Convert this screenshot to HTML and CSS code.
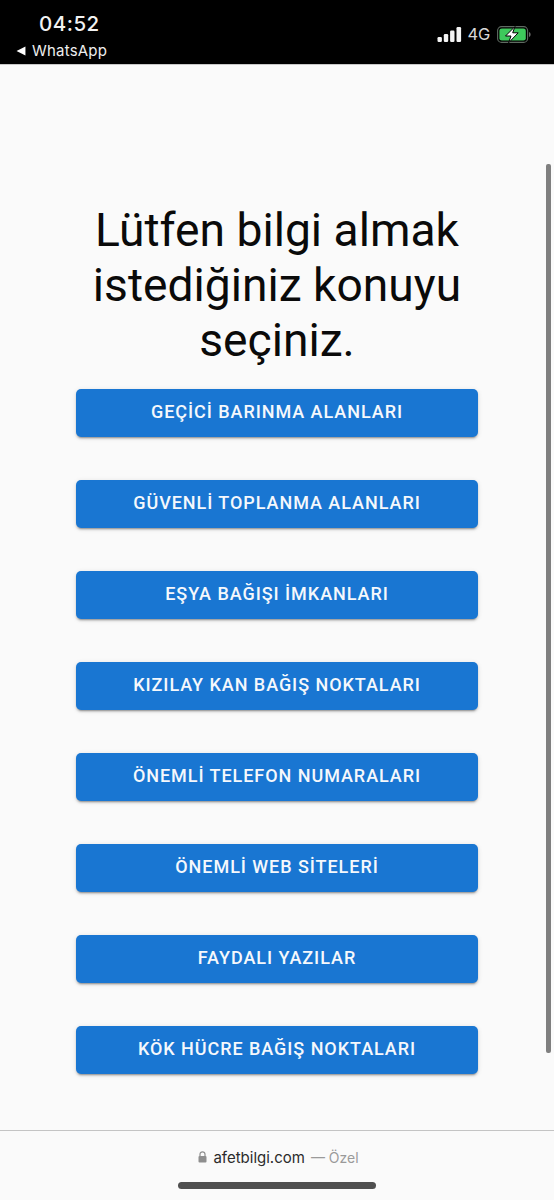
FILE: index.html
```html
<!DOCTYPE html>
<html lang="tr">
<head>
<meta charset="utf-8">
<title>afetbilgi.com</title>
<link rel="stylesheet" href="styles.css">
</head>
<body>
<header class="status">
  <div class="status-left">
    <div class="time">04:52</div>
    <div class="back"><svg class="back-arrow" viewBox="0 0 9 9"><path d="M8.500 0.500V8.500L0.500 4.500Z" fill="#fff"/></svg><span>WhatsApp</span></div>
  </div>
  <div class="status-right">
    <svg class="signal" viewBox="0 0 24 15"><rect x="0" y="10" width="4.400" height="5" rx="1.200"/><rect x="6.300" y="7" width="4.400" height="8" rx="1.200"/><rect x="12.600" y="3.500" width="4.400" height="11.500" rx="1.200"/><rect x="19" y="0" width="4.600" height="15" rx="1.200"/></svg>
    <span class="net">4G</span>
    <svg class="battery" viewBox="0 0 34 17"><rect x="0.600" y="0.600" width="30" height="15.800" rx="4" fill="none" stroke="#5f6b62" stroke-width="1.100"/><rect x="2.400" y="2.400" width="26.400" height="12.200" rx="2.400" fill="#3ec95c"/><path d="M32 6v5c1.200-.4 1.600-1.400 1.600-2.500S33.200 6.400 32 6Z" fill="#6a6a6a"/><path d="M18 0.500 8.500 10h5.500l-2.400 6.800 9.600-10h-5.500Z" fill="#fff" stroke="#000" stroke-width="1"/></svg>
  </div>
</header>
<main class="page">
  <h1 class="title">Lütfen bilgi almak istediğiniz konuyu seçiniz.</h1>
  <nav class="menu">
    <a class="btn">GEÇİCİ BARINMA ALANLARI</a>
    <a class="btn">GÜVENLİ TOPLANMA ALANLARI</a>
    <a class="btn">EŞYA BAĞIŞI İMKANLARI</a>
    <a class="btn">KIZILAY KAN BAĞIŞ NOKTALARI</a>
    <a class="btn">ÖNEMLİ TELEFON NUMARALARI</a>
    <a class="btn">ÖNEMLİ WEB SİTELERİ</a>
    <a class="btn">FAYDALI YAZILAR</a>
    <a class="btn">KÖK HÜCRE BAĞIŞ NOKTALARI</a>
  </nav>
  <div class="scrollbar"></div>
</main>
<footer class="bar">
  <div class="url">
    <svg class="lock" viewBox="0 0 9 12"><path d="M2 5V3.300a2.500 2.500 0 0 1 5 0V5" fill="none" stroke="#8e8e8e" stroke-width="1.200"/><rect x="0.500" y="5" width="8" height="6.500" rx="1" fill="#8e8e8e"/></svg>
    <span class="domain">afetbilgi.com</span>
    <span class="private">— Özel</span>
  </div>
  <div class="home"></div>
</footer>
</body>
</html>
```
FILE: styles.css
```css
* { box-sizing: border-box; }
html, body { margin: 0; padding: 0; }
body {
  width: 554px;
  height: 1200px;
  overflow: hidden;
  display: flex;
  flex-direction: column;
  background: #fafafa;
  font-family: Roboto, "Liberation Sans", sans-serif;
}
.status {
  height: 65px;
  flex: none;
  background: #000;
  border-bottom: 1px solid #c8c8c8;
  color: #fff;
  display: flex;
  justify-content: space-between;
  padding: 12px 23px 0 16px;
  font-family: Inter, "Liberation Sans", sans-serif;
}
.status-left { display: flex; flex-direction: column; }
.time {
  font-size: 20.500px;
  line-height: 24px;
  font-weight: 500;
  letter-spacing: 0.5px;
  padding-left: 23px;
  color: #f2f2f2;
}
.back {
  display: flex;
  align-items: center;
  gap: 6px;
  margin-top: 6px;
  font-size: 15px;
  line-height: 18px;
  color: #eee;
  letter-spacing: 0.2px;
}
.back-arrow { width: 10px; height: 10px; }
.status-right {
  display: flex;
  align-items: center;
  height: 44px;
}
.signal { width: 25px; height: 15px; fill: #f4f4f4; margin-right: 5px; }
.net { font-size: 16.500px; color: #d8d8d8; margin-right: 7px; letter-spacing: -0.2px; }
.battery { width: 34px; height: 17px; }
.page {
  flex: 1;
  position: relative;
  display: flex;
  flex-direction: column;
  align-items: center;
  padding-top: 138px;
}
.title {
  margin: 0;
  width: 402px;
  font-size: 46.200px;
  line-height: 55px;
  font-weight: 400;
  text-align: center;
  color: #0a0a0a;
}
.menu {
  margin-top: 20.500px;
  width: 402px;
  display: flex;
  flex-direction: column;
  gap: 43px;
}
.btn {
  height: 48px;
  display: flex;
  align-items: center;
  justify-content: center;
  padding-bottom: 2px;
  background: #1976d2;
  color: #f5f8fc;
  border-radius: 5px;
  font-size: 18px;
  font-weight: 500;
  letter-spacing: 0.950px;
  box-shadow: 0 3px 1px -2px rgba(0,0,0,.2), 0 2px 2px 0 rgba(0,0,0,.14), 0 1px 5px 0 rgba(0,0,0,.12);
}
.scrollbar {
  position: absolute;
  top: 99px;
  right: 3px;
  width: 5px;
  height: 889px;
  background: #7f7f7f;
  border-radius: 2px;
}
.bar {
  height: 70px;
  flex: none;
  border-top: 1px solid #c4c4c4;
  background: #fafafa;
  display: flex;
  flex-direction: column;
  align-items: center;
  padding-top: 17px;
}
.url {
  display: flex;
  align-items: center;
  height: 18px;
  padding-left: 3px;
  font-size: 15px;
  font-family: Inter, "Liberation Sans", sans-serif;
}
.lock { width: 9px; height: 12px; margin-right: 6px; }
.domain { color: #2b2b2b; margin-right: 6px; }
.private { color: #9a9a9a; font-size: 14px; }
.home {
  margin-top: 16px;
  width: 198px;
  height: 7px;
  border-radius: 4px;
  background: #4f4f4f;
}
```
